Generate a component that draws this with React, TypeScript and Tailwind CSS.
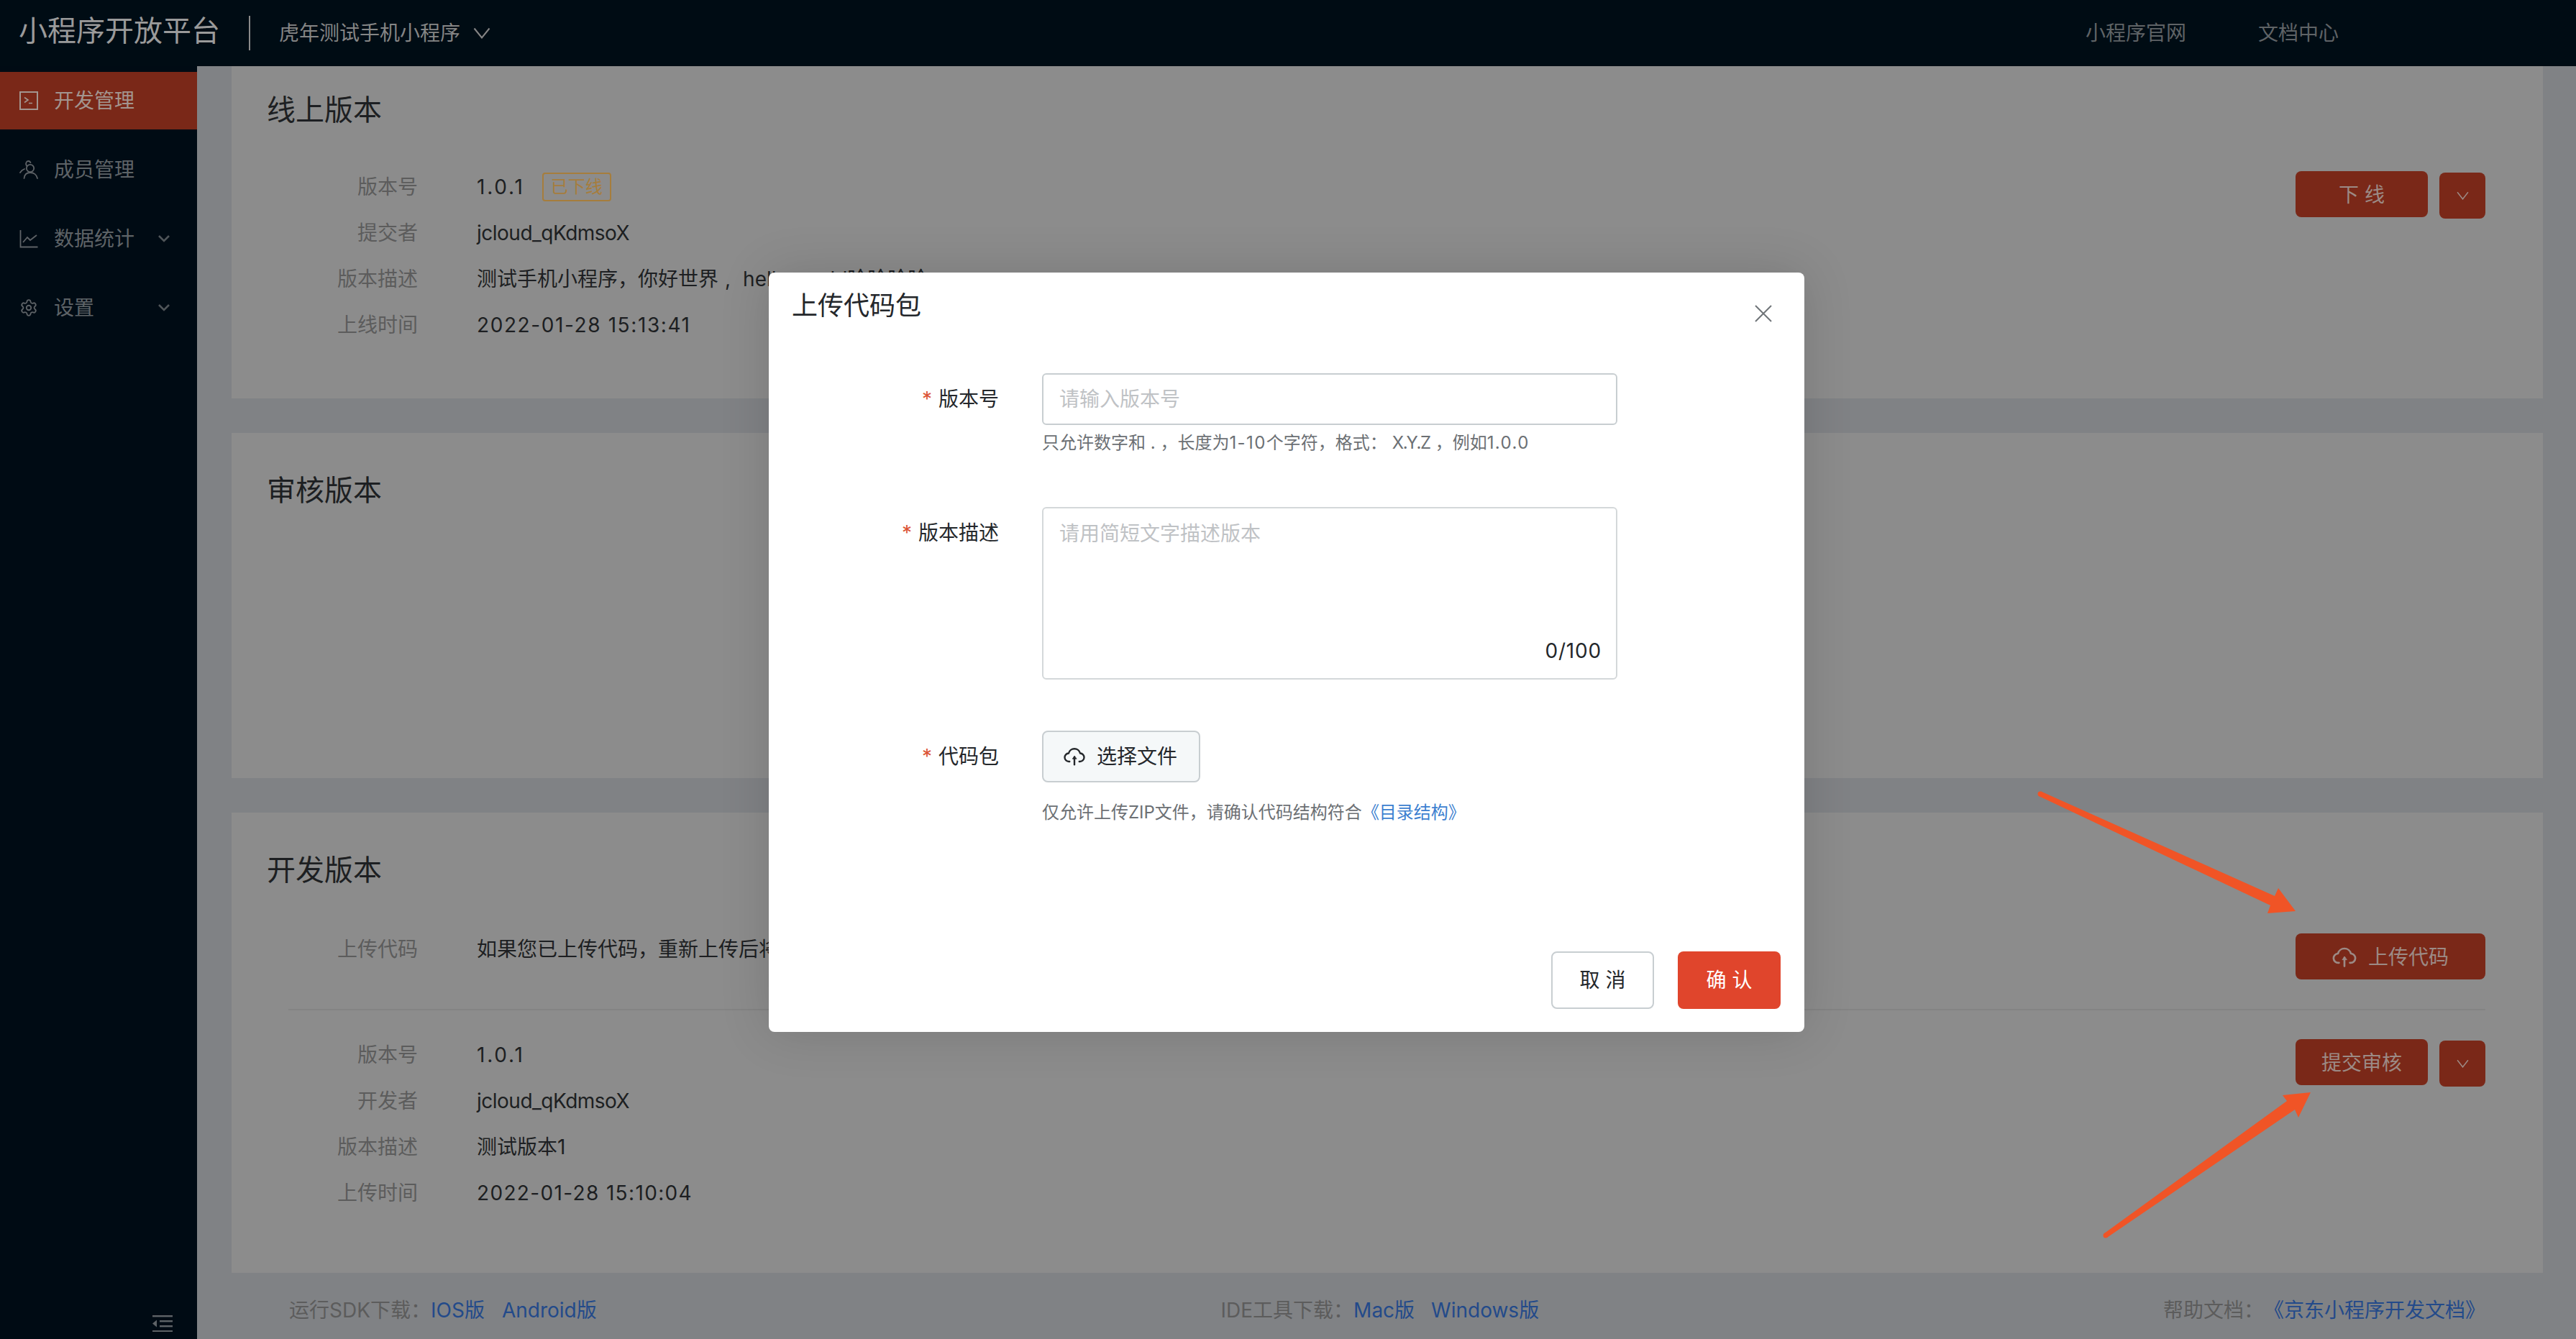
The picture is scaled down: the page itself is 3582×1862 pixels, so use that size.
import React from "react";
import { Settings } from "lucide-react";

const Cloud = ({ className }: { className?: string }) => (
  <svg viewBox="0 0 24 20" fill="none" stroke="currentColor" strokeWidth="1.9" strokeLinecap="round" strokeLinejoin="round" className={className}>
    <path d="M6.6 15.6H6A4.6 4.6 0 0 1 5.6 6.4 6.6 6.6 0 0 1 18.4 6.4 4.6 4.6 0 0 1 18 15.6H17.4" />
    <path d="M12 19V10.5" />
    <path d="M12 9.6 9.8 12.6H14.2Z" fill="currentColor" strokeWidth="0.6" />
  </svg>
);

const Chevron = ({ className }: { className?: string }) => (
  <svg viewBox="0 0 16 10" fill="none" stroke="currentColor" strokeWidth="1.4" preserveAspectRatio="none" className={className}>
    <path d="M1 1 8 9 15 1" />
  </svg>
);

const SideChevron = () => (
  <svg viewBox="0 0 16 10" fill="none" stroke="#4f5559" strokeWidth="2.6" className="ml-auto mr-[38px] h-[10px] w-[16px]">
    <path d="M1 1 8 8 15 1" />
  </svg>
);

const IconDev = () => (
  <svg viewBox="0 0 26 26" fill="none" stroke="currentColor" strokeWidth="2" className="h-[26px] w-[26px]">
    <rect x="1" y="1" width="24" height="24" />
    <path d="M7 8.5 12 12 7 15.5M13 16.5H18" strokeWidth="1.6" />
  </svg>
);

const IconMember = () => (
  <svg viewBox="0 0 26 26" fill="none" stroke="currentColor" strokeWidth="1.8" strokeLinecap="round" className="h-[26px] w-[26px]">
    <circle cx="15" cy="11" r="5.2" />
    <path d="M6.5 25C7 20 10 17 15 17S24 20 25 25" />
    <path d="M10 7.5A5 5 0 0 1 10.5 1.5C12.5 .6 14.5 1.2 15.5 3" />
    <path d="M1 17C2.5 14.5 4.5 12.8 7 12" />
  </svg>
);

const IconChart = () => (
  <svg viewBox="0 0 26 26" fill="none" stroke="currentColor" strokeWidth="1.8" className="h-[26px] w-[26px]">
    <path d="M1.5 1V24.5H25.5" />
    <path d="M5 18 11 11 15 15 24 8" />
  </svg>
);

const Menu = ({ icon, label, active, arrow }: { icon: React.ReactNode; label: string; active?: boolean; arrow?: boolean }) => (
  <div className={`flex h-[80px] items-center pl-[27px] ${active ? "bg-[#7a2818] text-[#a3958f]" : "text-[#5e6367]"}`}>
    {icon}
    <span className="ml-[22px] text-[28px]">{label}</span>
    {arrow && <SideChevron />}
  </div>
);

const Row = ({ label, children }: { label: string; children: React.ReactNode }) => (
  <div className="flex h-[64px] items-center text-[28px]">
    <div className="w-[180px] shrink-0 text-right text-[#5c5c5c]">{label}</div>
    <div className="ml-[82px] flex items-center whitespace-pre text-[#1d1f22]">{children}</div>
  </div>
);

const Ver = ({ children }: { children: string }) => <span className="tracking-[2.8px]">{children}</span>;
const User = ({ children }: { children: string }) => <span className="tracking-[-0.5px]">{children}</span>;
const Hint = ({ children }: { children: string }) => <span className="tracking-[1.4px]">{children}</span>;

const RedBtn = ({ children }: { children: React.ReactNode }) => (
  <div className="flex h-[64px] w-[184px] items-center justify-center rounded-[8px] bg-[#7a2818] pt-[2px] text-[28px] text-[#9c8a85]">{children}</div>
);

const DropBtn = () => (
  <div className="mt-[2px] flex h-[64px] w-[64px] items-center justify-center rounded-[8px] bg-[#7a2818] text-[#9c8a85]">
    <Chevron className="h-[12px] w-[17px]" />
  </div>
);

const Label = ({ children }: { children: string }) => (
  <div className="flex h-[72px] w-[320px] shrink-0 items-center justify-end text-[28px] text-[#24272b]">
    <span className="mr-[9px] text-[28px] leading-none text-[#dc5537]">*</span>
    {children}
  </div>
);

export default function App() {
  return (
    <div className="relative flex h-[1862px] w-[3582px] flex-col overflow-hidden bg-[#808285] font-[Inter,'Noto_Sans_CJK_SC',sans-serif]">
      <header className="flex h-[92px] shrink-0 items-center bg-[#000c14]">
        <div className="-mt-[6px] ml-[26px] text-[40px] text-[#9a9a9a]">小程序开放平台</div>
        <div className="ml-[40px] h-[48px] w-[2px] bg-[#8a8a8a]" />
        <div className="ml-[40px] text-[28px] text-[#858585]">虎年测试手机小程序</div>
        <Chevron className="ml-[18px] h-[16px] w-[24px] text-[#858585]" />
        <div className="ml-[2218px] text-[28px] text-[#5f6366]">小程序官网</div>
        <div className="ml-[100px] text-[28px] text-[#5f6366]">文档中心</div>
      </header>
      <div className="flex min-h-0 flex-1">
        <aside className="relative flex w-[274px] shrink-0 flex-col gap-[16px] bg-[#000b14] pt-[8px]">
          <Menu icon={<IconDev />} label="开发管理" active />
          <Menu icon={<IconMember />} label="成员管理" />
          <Menu icon={<IconChart />} label="数据统计" arrow />
          <Menu icon={<Settings size={26} strokeWidth={1.7} />} label="设置" arrow />
          <svg viewBox="0 0 30 24" className="absolute bottom-[10px] left-[211px] h-[24px] w-[30px]" fill="#5e6367">
            <rect x="1" y="1" width="28" height="2.4" />
            <rect x="11" y="8" width="18" height="2.4" />
            <rect x="11" y="15" width="18" height="2.4" />
            <rect x="1" y="22" width="28" height="2.4" />
            <path d="M7 7.5V17.5L1 12.5Z" />
          </svg>
        </aside>
        <main className="flex min-w-0 flex-1 flex-col pl-[48px] pr-[46px]">
          <section className="h-[462px] shrink-0 bg-[#8c8c8c] pl-[49px] pr-[80px] pt-[33px]">
            <h2 className="h-[56px] text-[40px] leading-[56px] text-[#1d1f22]">线上版本</h2>
            <div className="mt-[47px] flex justify-between pl-[30px]">
              <div>
                <Row label="版本号">
                  <Ver>1.0.1</Ver>
                  <span className="ml-[24px] flex h-[40px] w-[96px] items-center justify-center rounded-[4px] border-2 border-[#a67d3c] text-[24px] text-[#a67d3c]">已下线</span>
                </Row>
                <Row label="提交者"><User>jcloud_qKdmsoX</User></Row>
                <Row label="版本描述">测试手机小程序，你好世界<span className="mx-[9px]">,</span><span className="ml-[8px]">hello world哈哈哈哈</span></Row>
                <Row label="上线时间"><span className="tracking-[1.6px]">2022-01-28 15:13:41</span></Row>
              </div>
              <div className="flex gap-[16px] pt-[10px]">
                <RedBtn>下 线</RedBtn>
                <DropBtn />
              </div>
            </div>
          </section>
          <section className="mt-[48px] h-[480px] shrink-0 bg-[#8c8c8c] pl-[49px] pt-[52px]">
            <h2 className="h-[56px] text-[40px] leading-[56px] text-[#1d1f22]">审核版本</h2>
          </section>
          <section className="mt-[48px] h-[640px] shrink-0 bg-[#8c8c8c] pl-[49px] pr-[80px] pt-[52px]">
            <h2 className="h-[56px] text-[40px] leading-[56px] text-[#1d1f22]">开发版本</h2>
            <div className="ml-[30px] mt-[50px] flex justify-between border-b-2 border-[#838383] pb-[41px]">
              <Row label="上传代码">如果您已上传代码，重新上传后将覆盖之前的版本</Row>
              <div className="pt-[10px]">
                <div className="flex h-[64px] w-[264px] items-center justify-center gap-[16px] rounded-[8px] bg-[#7a2818] pt-[2px] text-[28px] text-[#9c8a85]">
                  <Cloud className="h-[28px] w-[34px]" />
                  上传代码
                </div>
              </div>
            </div>
            <div className="mt-[30px] flex justify-between pl-[30px]">
              <div>
                <Row label="版本号"><Ver>1.0.1</Ver></Row>
                <Row label="开发者"><User>jcloud_qKdmsoX</User></Row>
                <Row label="版本描述">测试版本1</Row>
                <Row label="上传时间"><span className="tracking-[1.35px]">2022-01-28 15:10:04</span></Row>
              </div>
              <div className="flex gap-[16px] pt-[10px]">
                <RedBtn>提交审核</RedBtn>
                <DropBtn />
              </div>
            </div>
          </section>
          <footer className="flex flex-1 items-center justify-between pl-[80px] pr-[80px] pt-[12px] text-[28px] text-[#5c5c5c]">
            <div className="flex">
              运行SDK下载：
              <span className="text-[#234a8a]">IOS版</span>
              <span className="ml-[24px] text-[#234a8a]">Android版</span>
            </div>
            <div className="flex">
              IDE工具下载：
              <span className="text-[#234a8a]">Mac版</span>
              <span className="ml-[23px] text-[#234a8a]">Windows版</span>
            </div>
            <div className="flex">
              帮助文档：
              <span className="text-[#234a8a]">《京东小程序开发文档》</span>
            </div>
          </footer>
        </main>
      </div>

      <div className="absolute left-[1069px] top-[379px] flex h-[1056px] w-[1440px] flex-col rounded-[8px] bg-white pb-[32px] pr-[33px] pt-[24px] shadow-[0_0_70px_rgba(0,0,0,0.14)]">
        <h3 className="ml-[32px] h-[44px] text-[36px] leading-[44px] text-[#24272b]">上传代码包</h3>
        <svg viewBox="0 0 24 24" className="absolute left-[1371px] top-[45px] h-[24px] w-[24px]" fill="none" stroke="#6f7478" strokeWidth="2">
          <path d="M1 1 23 23M23 1 1 23" />
        </svg>
        <div className="mt-[72px] flex">
          <Label>版本号</Label>
          <div className="ml-[60px]">
            <input readOnly placeholder="请输入版本号" className="h-[72px] w-[800px] rounded-[6px] border-2 border-[#c8ced1] bg-white px-[22px] text-[28px] outline-none placeholder:text-[#bfc2c5]" />
            <div className="mt-[8px] h-[34px] whitespace-pre text-[24px] leading-[34px] text-[#6c7074]">只允许数字和 . ，长度为<Hint>1-10</Hint>个字符，格式：<span className="ml-[7px] mr-[7px] tracking-[-1.4px]">X.Y.Z</span>，例如<Hint>1.0.0</Hint></div>
          </div>
        </div>
        <div className="mt-[72px] flex">
          <Label>版本描述</Label>
          <div className="relative ml-[60px]">
            <textarea readOnly placeholder="请用简短文字描述版本" className="block h-[240px] w-[800px] resize-none rounded-[6px] border-2 border-[#d4d8da] bg-white px-[22px] pt-[15px] text-[28px] leading-[40px] outline-none placeholder:text-[#bfc2c5]" />
            <span className="absolute bottom-[22px] right-[22px] text-[28px] leading-[36px] tracking-[0.8px] text-[#24272b]">0/100</span>
          </div>
        </div>
        <div className="mt-[71px] flex">
          <Label>代码包</Label>
          <div className="ml-[60px]">
            <div className="flex h-[72px] w-[220px] items-center rounded-[8px] border-2 border-[#c8ced1] bg-[#f5f8f9] pl-[28px] text-[28px] text-[#24272b]">
              <Cloud className="h-[26px] w-[30px]" />
              <span className="ml-[16px]">选择文件</span>
            </div>
            <div className="mt-[25px] h-[34px] text-[24px] leading-[34px] text-[#6c7074]">
              仅允许上传ZIP文件，请确认代码结构符合<span className="text-[#3c7fd0]">《目录结构》</span>
            </div>
          </div>
        </div>
        <div className="mt-auto flex justify-end gap-[33px]">
          <div className="flex h-[80px] w-[143px] items-center justify-center rounded-[8px] border-2 border-[#c8ced1] text-[28px] text-[#24272b]">取 消</div>
          <div className="flex h-[80px] w-[143px] items-center justify-center rounded-[8px] bg-[#e0452c] text-[28px] text-white">确 认</div>
        </div>
      </div>

      <svg className="pointer-events-none absolute left-0 top-0 h-[1862px] w-[3582px]" viewBox="0 0 3582 1862" fill="#f05426">
        <circle cx="2837" cy="1104" r="3.5" />
        <polygon points="2838,1100.5 3163,1246 3168,1235 3192,1267 3153,1270 3157,1259 2835,1107" />
        <circle cx="2928" cy="1718" r="3.5" />
        <polygon points="2925.5,1715.5 3180,1531 3174,1523 3213,1519 3196,1554 3191,1543 2930.5,1720.5" />
      </svg>
    </div>
  );
}
